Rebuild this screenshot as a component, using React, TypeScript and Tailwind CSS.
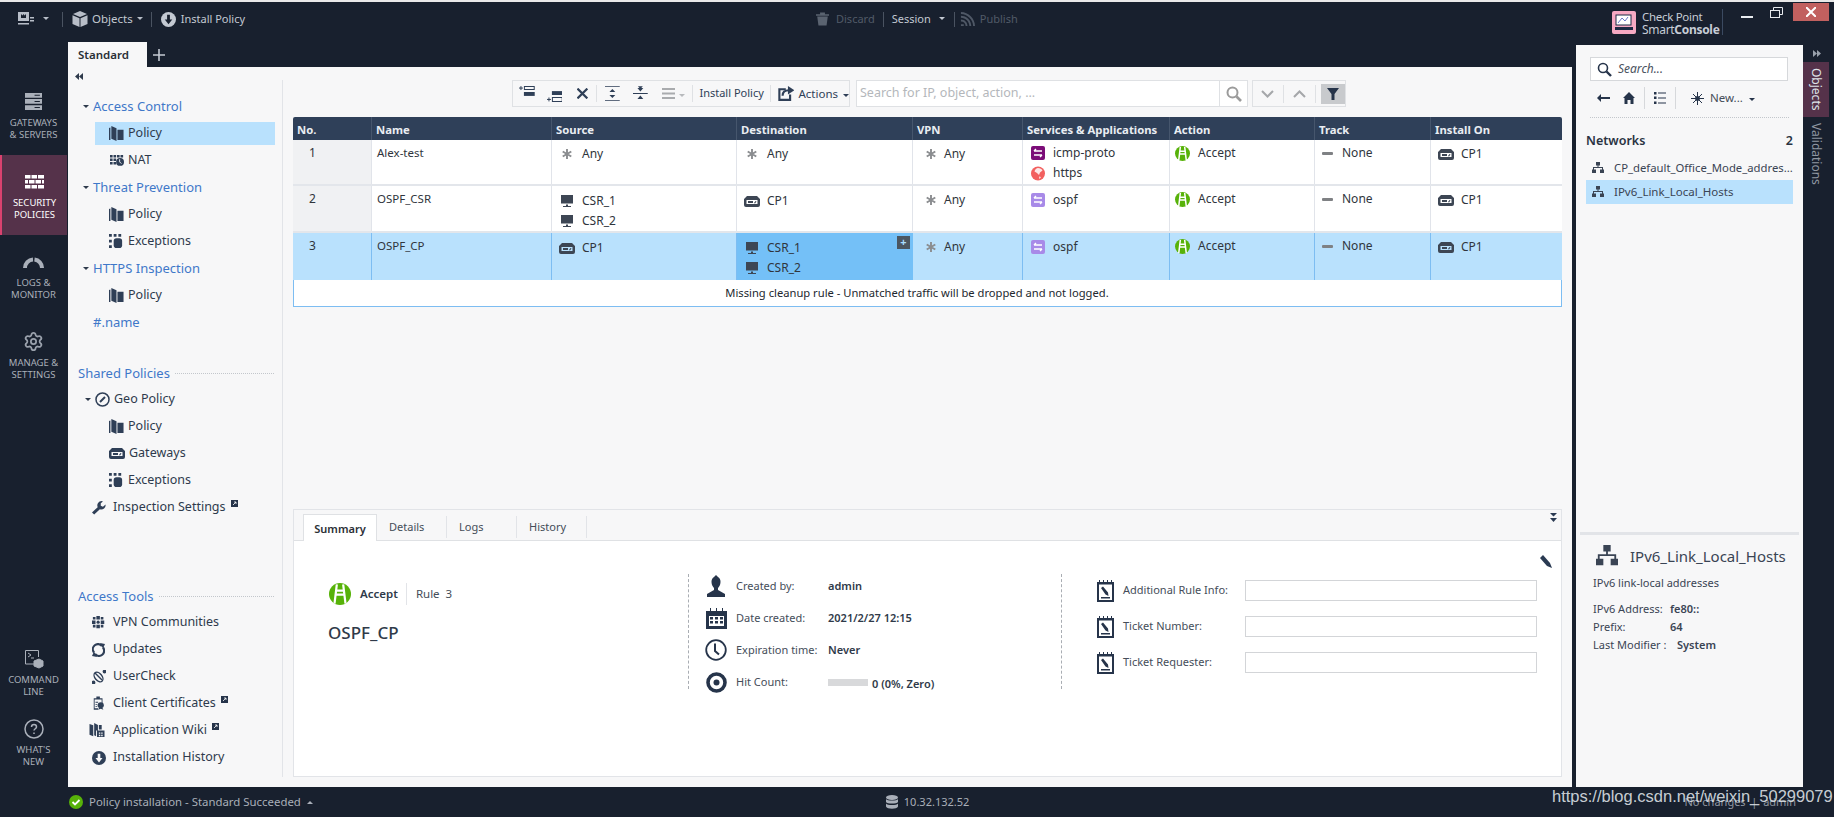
import React from "react";
import { Settings } from "lucide-react";

const F = "font-['Noto_Sans','Open_Sans',sans-serif]";

function Ic({ w = 14, h = 14, vb = "0 0 16 16", c = "", children }: any) {
  return (
    <svg width={w} height={h} viewBox={vb} className={"shrink-0 " + c} fill="currentColor">
      {children}
    </svg>
  );
}
const Book = () => (
  <Ic w={15} h={15} c="text-[#2f3f57]">
    <path d="M0 2l1.500-.5V15H0zM2.500 0L8 2.500V16L2.500 13.500zM9 4h6.500v11H9z" />
  </Ic>
);
const Nat = () => (
  <Ic w={16} h={14} c="text-[#2f3f57]">
    <path d="M0 1h3v3H0zM4 1h3v3H4zM8 1h3v3H8zM12 1h3v3h-3zM0 5h3v3H0zM4 5h3v3H4zM0 9h3v3H0zM4 9h3v3H4z" />
    <circle cx="11.500" cy="9" r="4.500" />
    <path d="M11 6v3l2 2" stroke="#fff" fill="none" />
  </Ic>
);
const Exc = () => (
  <Ic w={15} h={15} c="text-[#2f3f57]">
    <path d="M0 0h3v3H0zM0 6h3v3H0zM0 12h3v3H0zM5 0h3v3H5zM10 0h3v3h-3z" />
    <rect x="5" y="4.500" width="9" height="10.500" rx="3" />
  </Ic>
);
const Gw = ({ c = "text-[#3d4654]" }: any) => (
  <Ic w={16} h={11} vb="0 0 16 11" c={c}>
    <path fillRule="evenodd" d="M3 0h10l3 3v6a2 2 0 01-2 2H2a2 2 0 01-2-2V3zM2.500 4v4h11V4z" />
    <path d="M4 5h5v2H4zM10 7l1.500-2 1 .5L11 7.500z" />
  </Ic>
);
const Mon = () => (
  <Ic w={13} h={13} vb="0 0 13 13" c="text-[#3d4654]">
    <path d="M0 0h12v8.500H0zM5 9.500h2V11h3v1H2v-1h3z" />
  </Ic>
);
const Star = () => (
  <Ic w={10} h={10} vb="0 0 10 10" c="text-[#8b8d90]">
    <g stroke="currentColor" strokeWidth="1.900">
      <path d="M5 0v10M.7 2.500l8.600 5M9.300 2.500l-8.600 5" />
    </g>
  </Ic>
);
const Svc = ({ c }: { c: string }) => (
  <svg width="14" height="14" viewBox="0 0 14 14" className="shrink-0">
    <rect width="14" height="14" rx="2" fill={c} />
    <path d="M3 5h8M3 5l2-2M11 9H3M11 9l-2 2" stroke="#fff" strokeWidth="1.400" fill="none" />
  </svg>
);
const Globe = () => (
  <svg width="14" height="15" viewBox="0 0 14 15" className="shrink-0">
    <circle cx="7" cy="7.500" r="7" fill="#f2605f" />
    <path d="M7 2c2 0 4 1 4.500 2.500L9 6.500 8 9 6 7 3.500 5.500C4 3.500 5.500 2 7 2zM8 10.500l2 .5-1.500 2.200z" fill="#fff" opacity=".85" />
  </svg>
);
const Accept = ({ s = 15 }: { s?: number }) => (
  <svg width={s} height={s} viewBox="0 0 16 16" className="shrink-0">
    <circle cx="8" cy="8" r="8" fill="#57b209" />
    <path d="M5.700 1L4 15M10.300 1L12 15M5 5.500h6M4.500 8.500h7" stroke="#fff" strokeWidth="1.600" fill="none" />
  </svg>
);
const Dash = () => <span className="block w-[11px] h-[3px] bg-[#7f8184] shrink-0 rounded-[1px]" />;
const NetI = ({ s = 12 }: { s?: number }) => (
  <Ic w={s} h={s} vb="0 0 12 12" c="text-[#3a4454]">
    <path d="M4 0h4v3.500H6.500V5H11v2.500h1V11H8V7.500h2V6H2v1.500h2V11H0V7.500h1V5h4.500V3.500H4z" />
  </Ic>
);
const Cell = ({ items, pl, gap, pt = "pt-[4px]" }: any) => (
  <div className={`flex flex-col ${pt}`} style={{ paddingLeft: pl }}>
    {items.map(([icon, t]: any, i: number) => (
      <div key={i} className="flex items-center h-5" style={{ gap }}>
        <span className="flex items-center justify-center w-[14px] shrink-0">{icon}</span>
        <span className="text-[12px] text-[#30353c] whitespace-nowrap">{t}</span>
      </div>
    ))}
  </div>
);

const cols = "grid grid-cols-[79px_180px_185px_176px_110px_147px_145px_116px_131px]";
const heads = ["No.", "Name", "Source", "Destination", "VPN", "Services & Applications", "Action", "Track", "Install On"];

function Row({ n, name, src, dst, svc, sel, h, pt, svcPt }: any) {
  const b = sel ? "border-r border-[#7dbdf2]" : "border-r border-[#e1e4ea]";
  return (
    <div className={`${cols} ${h} ${sel ? "bg-[#b9e1fd]" : "bg-white border-b-2 border-[#e3e6eb]"}`}>
      <div className={`${b} ${sel ? "" : "bg-[#f0f1f3]"} pl-[16px] pt-[3px] text-[12px] leading-5 text-[#30353c]`}>{n}</div>
      <div className={`${b} pl-[5px] pt-[3px] text-[11.500px] leading-5 text-[#30353c]`}>{name}</div>
      <div className={b}><Cell pt={pt} pl={8} gap={8} items={src} /></div>
      <div className={`${sel ? "bg-[#74c0f7] relative" : b}`}>
        <Cell pt={pt} pl={8} gap={8} items={dst} />
        {sel && <span className="absolute right-[3px] top-[3px] w-[13px] h-[13px] bg-[#4b5661] text-[#a9dcff] text-[11px] leading-[12px] text-center font-bold">+</span>}
      </div>
      <div className={b}><Cell pl={11} gap={6} items={[[<Star />, "Any"]]} /></div>
      <div className={b}><Cell pt={svcPt} pl={8} gap={8} items={svc} /></div>
      <div className={b}><Cell pt="pt-[3px]" pl={5} gap={9} items={[[<Accept />, "Accept"]]} /></div>
      <div className={b}><Cell pt="pt-[3px]" pl={5} gap={8} items={[[<Dash />, "None"]]} /></div>
      <div><Cell pl={8} gap={8} items={[[<Gw />, "CP1"]]} /></div>
    </div>
  );
}

const Caret = () => <span className="inline-block align-[3px] w-0 h-0 border-x-[3px] border-x-transparent border-t-[3px] border-t-current" />;

function Nav({ icon, children, sel, ext, pl = 41, gap = 4 }: any) {
  return (
    <div className="h-[27px] flex items-center pl-[27px] pr-[7px]">
      <div className={`flex-1 h-[23px] flex items-center ${sel ? "bg-[#b9e1fd]" : ""}`} style={{ paddingLeft: pl - 27, gap }}>
        {icon}
        <span className="text-[12.500px] text-[#2e3a4c] whitespace-nowrap">{children}</span>
        {ext && <Ext />}
      </div>
    </div>
  );
}
const Ext = () => (
  <svg width="7" height="7" viewBox="0 0 7 7" className="shrink-0 -mt-[8px] ml-[1px]">
    <rect width="7" height="7" fill="#26344a" />
    <path d="M2 5l3-3M3 2h2v2" stroke="#fff" strokeWidth=".8" fill="none" />
  </svg>
);
function Head({ children }: any) {
  return (
    <div className="h-[27px] flex items-center pl-[15px] gap-[4px]">
      <span className="w-0 h-0 border-x-[3px] border-x-transparent border-t-[3px] border-t-[#2e3a4c]" />
      <span className="text-[13px] text-[#3f78c9] whitespace-nowrap">{children}</span>
    </div>
  );
}
function Sec({ children }: any) {
  return (
    <div className="h-[25px] flex items-center pl-[10px] pr-[8px] gap-[5px]">
      <span className="text-[13px] text-[#3f78c9] whitespace-nowrap">{children}</span>
      <span className="flex-1 border-t border-dotted border-[#c3c7cc]" />
    </div>
  );
}
function Tool({ icon, children, ext }: any) {
  return (
    <div className="h-[27px] flex items-center pl-[23px] pr-[7px] gap-[4px]">
      <span className="w-[15px] flex justify-center shrink-0">{icon}</span>
      <span className="ml-[3px] text-[12.500px] text-[#2e3a4c] whitespace-nowrap">{children}</span>
      {ext && <Ext />}
    </div>
  );
}
function RailItem({ icon, l1, l2, sel, h = "h-[80px]" }: any) {
  return (
    <div className={`${h} flex flex-col items-center justify-center gap-[3px] ${sel ? "bg-[#55324a] border-l-2 border-[#d9426f] text-white w-[67px]" : "text-[#a9afb9] w-[67px]"}`}>
      <span className="h-6 flex items-center justify-center">{icon}</span>
      <span className="text-[9.500px] leading-3 text-center whitespace-nowrap">{l1}<br />{l2}</span>
    </div>
  );
}
const RowS = ({ icon, label, children }: any) => (
  <div className="h-6 flex items-center mb-2">
    <span className="w-[22px] flex justify-center shrink-0">{icon}</span>
    <span className="ml-[9px] w-[92px] text-[11px] text-[#454d59] whitespace-nowrap">{label}</span>
    {children}
  </div>
);
const Note = () => (
  <Ic w={17} h={22} vb="0 0 17 22" c="text-[#26344a]">
    <path fillRule="evenodd" d="M0 2h17v20H0zM2 4.500v15.500h13V4.500z" />
    <path d="M2 0h1v3H2zM6 0h1v3H6zM10 0h1v3h-1zM14 0h1v3h-1zM4 8l2-1.500 5 6 .5 3.500-3-1.500z M4 17h9v1.500H4z" />
  </Ic>
);
const TicketRow = ({ label }: any) => (
  <div className="h-[21px] flex items-center mb-[15px]">
    <Note />
    <span className="ml-[9px] w-[122px] text-[11px] text-[#454d59] whitespace-nowrap">{label}</span>
    <span className="block w-[292px] h-[21px] bg-white border border-[#d3d5d8]" />
  </div>
);
const Val = ({ children }: any) => <span className="text-[11px] font-semibold text-[#2f3a49] whitespace-nowrap">{children}</span>;

export default function App() {
  return (
    <div className={`${F} w-[1834px] h-[817px] overflow-hidden flex flex-col bg-[#18202e] relative`}>
      <div className="h-[2px] bg-[#e9e9e9] shrink-0" />
      {/* Top bar */}
      <div className="h-[40px] shrink-0 flex items-start text-[#c3c9d2]">
        <div className="flex items-center h-[34px] text-[11.500px] pl-[18px] w-[700px]">
          <Ic w={16} h={14} vb="0 0 16 14" c="text-[#b8bec8]">
            <path d="M0 0h11v9H0zM12 5h4v1.500h-4zM12 8h4v1.500h-4zM0 11h11v1.500H0z" />
            <path d="M3 2l1.500 1.500L5.500 2l1 1.500L8 2v4H3z" fill="#18202e" />
          </Ic>
          <span className="ml-[9px] text-[#b8bec8]"><Caret /></span>
          <span className="ml-[13px] w-px h-[15px] bg-[#4a5361]" />
          <Ic w={16} h={16} c="ml-[9px] text-[#b8bec8]">
            <path d="M8 0l7 3-7 3-7-3zM.500 4.300l7 3V16l-7-3zM15.500 4.300l-7 3V16l7-3z" />
          </Ic>
          <span className="ml-[4px]">Objects</span>
          <span className="ml-[4px] text-[#b8bec8]"><Caret /></span>
          <span className="ml-[8px] w-px h-[15px] bg-[#4a5361]" />
          <Ic w={15} h={15} c="ml-[9px] text-[#c3c9d2]">
            <circle cx="8" cy="8" r="8" />
            <path d="M6.500 3h3v5H12l-4 5-4-5h2.500z" fill="#18202e" />
          </Ic>
          <span className="ml-[5px] text-[11px]">Install Policy</span>
        </div>
        <div className="flex items-center h-[34px] text-[11px] ml-[116px]">
          <Ic w={13} h={14} c="text-[#5a6370]">
            <path d="M5 0h6v2h5v2H0V2h5zM1.500 5h13L13 16H3z" />
          </Ic>
          <span className="ml-[7px] text-[#515a67]">Discard</span>
          <span className="ml-[8px] w-px h-[15px] bg-[#4a5361]" />
          <span className="ml-[8px] text-[#c3c9d2]">Session</span>
          <span className="ml-[8px] text-[#c3c9d2]"><Caret /></span>
          <span className="ml-[9px] w-px h-[15px] bg-[#4a5361]" />
          <Ic w={15} h={15} c="ml-[5px] text-[#4f5866]">
            <path d="M1 13h3v2H1zM1 8c4 0 7 3 7 7H6c0-3-2-5-5-5zM1 4c6 0 11 5 11 11h-2c0-5-4-9-9-9zM1 0c8 0 15 7 15 15h-2C14 8 8 2 1 2z" />
          </Ic>
          <span className="ml-[5px] text-[#515a67]">Publish</span>
        </div>
        <div className="ml-auto flex items-start">
          <svg width="24" height="23" viewBox="0 0 24 23" className="mt-[9px] shrink-0">
            <rect width="24" height="23" rx="2" fill="#f6a9c2" />
            <rect x="4" y="4" width="15" height="10" fill="#fff" stroke="#1d2a44" />
            <path d="M6 12l4-5 3 3 3-4" stroke="#6a78c8" fill="none" />
            <rect x="3" y="16" width="18" height="3" fill="#1d2a44" />
          </svg>
          <div className="ml-[6px] mt-[8px] w-[72px] flex flex-col leading-[13px] text-[11.500px] text-[#c6ccd5] whitespace-nowrap tracking-[-0.3px]">
            <span>Check Point</span>
            <span className="text-[12px]">Smart<b>Console</b></span>
          </div>
          <span className="ml-[8px] mt-[7px] w-px h-[26px] bg-[#3b4a61]" />
          <span className="ml-[18px] mt-[14px] w-[12px] h-[2px] bg-[#e8ebef]" />
          <svg width="13" height="13" viewBox="0 0 13 13" className="ml-[17px] mt-[5px]" fill="none" stroke="#e8ebef">
            <path d="M3.500 3V.5h9v7H10" />
            <rect x=".5" y="3.500" width="9" height="7" />
          </svg>
          <span className="ml-[10px] mr-[5px] mt-[1px] w-[36px] h-[18px] bg-[#c1605f] flex items-center justify-center">
            <svg width="10" height="10" viewBox="0 0 10 10" stroke="#fff" strokeWidth="2"><path d="M0 0l10 10M10 0L0 10" /></svg>
          </span>
        </div>
      </div>

      {/* Body */}
      <div className="flex-1 flex min-h-0">
        {/* Rail */}
        <div className="w-[68px] shrink-0 flex flex-col pt-[33px] pb-[18px]">
          <RailItem l1="GATEWAYS" l2="& SERVERS" icon={
            <Ic w={17} h={17} c="text-[#aab0ba]"><path fillRule="evenodd" d="M0 0h16v4.500H0zM0 5.700h16v4.500H0zM0 11.500h16V16H0zM9 1.700v1h5v-1zM9 7.500v1h5v-1zM9 13.200v1h5v-1z" /></Ic>
          } />
          <RailItem sel l1="SECURITY" l2="POLICIES" icon={
            <Ic w={19} h={14} vb="0 0 19 14" c="text-white"><path d="M0 0h5.500v3.500H0zM6.500 0h5.500v3.500H6.500zM13 0h6v3.500h-6zM0 5h3v3.500H0zM4 5h5.500v3.500H4zM10.500 5H16v3.500h-5.500zM17 5h2v3.500h-2zM0 10h5.500v3.500H0zM6.500 10h5.500v3.500H6.500zM13 10h6v3.500h-6z" /></Ic>
          } />
          <RailItem l1="LOGS &" l2="MONITOR" icon={
            <svg width="21" height="12" viewBox="0 0 21 12" fill="none" stroke="#aab0ba" strokeWidth="4"><path d="M2 12A8.500 8.500 0 0110 3.500M11.500 3.500A8.500 8.500 0 0119 12" /></svg>
          } />
          <RailItem l1="MANAGE &" l2="SETTINGS" icon={<Settings size={21} className="text-[#9aa1ac]" />} />
          <div className="flex-1" />
          <RailItem h="h-[54px]" l1="COMMAND" l2="LINE" icon={
            <svg width="20" height="20" viewBox="0 0 20 20" fill="none" stroke="#aab0ba"><path d="M13 15H1.500V1.500h13V8M4 4l3 2-3 2M7 9h3" /><path d="M10 12l5-2 4 2v5l-4 2-5-2z" fill="#aab0ba" /></svg>
          } />
          <div className="h-4" />
          <RailItem h="h-[54px]" l1="WHAT'S" l2="NEW" icon={
            <svg width="20" height="20" viewBox="0 0 20 20" fill="none" stroke="#aab0ba" strokeWidth="1.500"><circle cx="10" cy="10" r="9" /><path d="M7.500 8a2.500 2.500 0 115 0c0 1.500-2.500 2-2.500 3.500M10 13.500v1.500" /></svg>
          } />
        </div>

        {/* Centre */}
        <div className="w-[1504px] shrink-0 flex flex-col">
          <div className="h-[25px] flex items-center shrink-0">
            <div className="w-[79px] h-full bg-[#f7f7f8] flex items-center pl-[10px] text-[11.500px] font-semibold text-[#2a2f36]">Standard</div>
            <svg width="12" height="12" viewBox="0 0 12 12" className="ml-[6px]" stroke="#c3c9d2" strokeWidth="1.600"><path d="M6 0v12M0 6h12" /></svg>
          </div>
          <div className="flex-1 flex bg-[#f7f7f8] min-h-0">
            {/* Nav */}
            <div className="w-[214px] shrink-0 flex flex-col">
              <div className="h-[26px] pl-[7px] pt-[6px] shrink-0 flex items-start">
                <svg width="8" height="7" viewBox="0 0 8 7" fill="#2e3a4c"><path d="M4 0v7L0 3.500zM8 0v7L4 3.500z" /></svg>
              </div>
              <Head>Access Control</Head>
              <Nav sel icon={<Book />}>Policy</Nav>
              <Nav icon={<Nat />} gap={3}>NAT</Nav>
              <Head>Threat Prevention</Head>
              <Nav icon={<Book />}>Policy</Nav>
              <Nav icon={<Exc />}>Exceptions</Nav>
              <Head>HTTPS Inspection</Head>
              <Nav icon={<Book />}>Policy</Nav>
              <div className="h-[27px] flex items-center pl-[25px] text-[13px] text-[#3f78c9]">#.name</div>
              <div className="h-[25px]" />
              <Sec>Shared Policies</Sec>
              <div className="h-[27px] flex items-center pl-[17px] gap-[4px]">
                <span className="w-0 h-0 border-x-[3px] border-x-transparent border-t-[3px] border-t-[#2e3a4c]" />
                <svg width="15" height="15" viewBox="0 0 15 15" fill="none" stroke="#2f3f57" strokeWidth="1.500"><circle cx="7.500" cy="7.500" r="6.500" /><path d="M10 5L5 10" strokeWidth="2" /></svg>
                <span className="text-[12.500px] text-[#2e3a4c]">Geo Policy</span>
              </div>
              <Nav icon={<Book />}>Policy</Nav>
              <Nav icon={<Gw c="text-[#2f3f57]" />}>Gateways</Nav>
              <Nav icon={<Exc />}>Exceptions</Nav>
              <Tool ext icon={
                <Ic w={14} h={14} c="text-[#2f3f57]"><path d="M11 0a5 5 0 00-4.500 7L0 13l2.500 2.500L9 9.500A5 5 0 0015.500 4l-3 2.500-2.500-1L10 2.500 12.500.5z" /></Ic>
              }>Inspection Settings</Tool>
              <div className="flex-1" />
              <Sec>Access Tools</Sec>
              <Tool icon={
                <Ic w={14} h={14} c="text-[#2f3f57]"><path d="M5 0h4v4H5zM0 5h4v4H0zM10 5h4v4h-4zM5 10h4v4H5zM1 1h3v3H1zM10 1h3v3h-3zM1 10h3v3H1zM10 10h3v3h-3z" /><circle cx="7" cy="7" r="1.800" /></Ic>
              }>VPN Communities</Tool>
              <Tool icon={
                <svg width="13" height="14" viewBox="0 0 13 14" fill="none" stroke="#2f3f57" strokeWidth="2.200"><path d="M2 9.500A5 5 0 0110 3M11 4.500A5 5 0 013 11" /><path d="M8 0l5 1-2 4.500zM5 14l-5-1 2-4.500z" fill="#2f3f57" stroke="none" /></svg>
              }>Updates</Tool>
              <Tool icon={
                <svg width="14" height="14" viewBox="0 0 14 14" fill="none" stroke="#2f3f57" strokeWidth="1.400"><ellipse cx="6.500" cy="7" rx="3.500" ry="5.500" transform="rotate(-40 6.500 7)" /><path d="M3 3l7 7" /><circle cx="12.500" cy="1.500" r="1.200" fill="#2f3f57" /><circle cx="1.500" cy="12.500" r="1.200" fill="#2f3f57" /></svg>
              }>UserCheck</Tool>
              <Tool ext icon={
                <Ic w={14} h={15} c="text-[#2f3f57]"><path fillRule="evenodd" d="M2 2h3V0h4v2h3v6h-1V3.500H3v10h4V15H2z" /><path d="M4 6h3v1H4zM4 8.500h2v1H4zM4 11h2v1H4z" /><circle cx="10" cy="10" r="3.500" /><path d="M8 13l-1 2 3-1 3 1-1-2z" /></Ic>
              }>Client Certificates</Tool>
              <Tool ext icon={
                <Ic w={16} h={15} c="-ml-[3px] text-[#2f3f57]"><path d="M0 1l4 1.500V14L0 12.500zM5 0l4 2v6H7v6l-2-1zM10 2h3v5h-3zM8 8h8v7H8z" /><path d="M10 10h1.500v1.500H10zM12.500 10H14v1.500h-1.500zM10 12.500h1.500V14H10zM12.500 12.500H14V14h-1.500z" fill="#f7f7f8" /></Ic>
              }>Application Wiki</Tool>
              <Tool icon={
                <Ic w={14} h={14} c="text-[#2f3f57]"><circle cx="8" cy="8" r="8" /><path d="M6.500 3h3v5H12l-4 5-4-5h2.500z" fill="#f7f7f8" /></Ic>
              }>Installation History</Tool>
              <div className="h-[16px] shrink-0" />
            </div>
            <div className="w-px mt-[13px] mb-[10px] bg-[#e2e4e8] shrink-0" />

            {/* Main */}
            <div className="flex-1 flex flex-col pl-[10px] pr-[10px] pt-[13px] pb-[10px] min-w-0">
              {/* Toolbar */}
              <div className="h-[27px] flex items-stretch pl-[219px] shrink-0">
                <div className="w-[338px] border border-[#dfe1e4] flex items-center text-[#2f3f57]">
                  <svg width="16" height="13" viewBox="0 0 16 13" className="ml-[6px] -mt-[4px]" fill="currentColor"><path d="M0 3h4M2 1v4" stroke="currentColor" fill="none" /><path fillRule="evenodd" d="M5 1h11v4H5zM6 2v2h9V2z" /><path d="M5 7h11v4H5z" /></svg>
                  <svg width="16" height="13" viewBox="0 0 16 13" className="ml-[12px] mt-[6px]" fill="currentColor"><path d="M5 1h11v4H5z" /><path fillRule="evenodd" d="M5 7h11v5H5zM6 8v3h9V8z" /><path d="M0 9.500h4M2 7.500v4" stroke="currentColor" fill="none" /></svg>
                  <svg width="11" height="11" viewBox="0 0 11 11" className="ml-[15px]" stroke="currentColor" strokeWidth="2.200"><path d="M0.500 .5l10 10M10.500 .5l-10 10" /></svg>
                  <span className="ml-[8px] w-px h-[17px] bg-[#dfe1e4]" />
                  <svg width="15" height="15" viewBox="0 0 15 15" className="ml-[8px]" fill="currentColor"><path d="M0 0h15v1H0zM0 14h15v1H0zM7.500 3l3 3h-6zM7.500 12l-3-3h6z" /></svg>
                  <svg width="15" height="15" viewBox="0 0 15 15" className="ml-[13px]" fill="currentColor"><path d="M0 7h15v1H0zM5 0h5L7.500 3zM4.500 2h6L7.500 5.500zM7.500 9.500l3 3.500h-6z" /></svg>
                  <svg width="14" height="11" viewBox="0 0 14 11" className="ml-[14px]" fill="#a9abae"><path d="M0 0h14v2H0zM0 4.500h14v2H0zM0 9h14v2H0z" /></svg>
                  <span className="ml-[4px] text-[#b8babd]"><Caret /></span>
                  <span className="ml-[7px] w-px h-[17px] bg-[#dfe1e4]" />
                  <span className="ml-[6px] text-[11px] text-[#2f3f57] whitespace-nowrap">Install Policy</span>
                  <span className="ml-[6px] w-px h-[17px] bg-[#dfe1e4]" />
                  <svg width="17" height="15" viewBox="0 0 15 14" className="ml-[7px]" fill="none" stroke="currentColor" strokeWidth="2"><path d="M7 3H1v10h10V8" /><path d="M4 9c0-3 2-5 6-5" /><path d="M9 0l6 4-6 4z" fill="currentColor" stroke="none" /></svg>
                  <span className="ml-[4px] text-[11.500px] whitespace-nowrap">Actions</span>
                  <span className="ml-[5px]"><Caret /></span>
                </div>
                <div className="ml-[6px] w-[392px] bg-white border border-[#dfe1e4] flex items-center">
                  <span className="flex-1 pl-[3px] text-[12.500px] text-[#b4b7bb] whitespace-nowrap">Search for IP, object, action, ...</span>
                  <span className="w-[28px] h-full border-l border-[#dfe1e4] flex items-center justify-center">
                    <svg width="16" height="16" viewBox="0 0 16 16" fill="none" stroke="#9b9b9b" strokeWidth="2"><circle cx="6.500" cy="6.500" r="5" /><path d="M10.500 10.500L15 15" strokeWidth="2.600" /></svg>
                  </span>
                </div>
                <div className="ml-[4px] w-[94px] border border-[#dfe1e4] flex items-center">
                  <svg width="13" height="8" viewBox="0 0 13 8" className="ml-[8px]" fill="none" stroke="#a5a7aa" strokeWidth="2"><path d="M1 1l5.500 5.500L12 1" /></svg>
                  <span className="ml-[9px] w-px h-[18px] bg-[#dfe1e4]" />
                  <svg width="13" height="8" viewBox="0 0 13 8" className="ml-[9px]" fill="none" stroke="#a5a7aa" strokeWidth="2"><path d="M1 7l5.500-5.500L12 7" /></svg>
                  <span className="ml-[9px] w-px h-[18px] bg-[#dfe1e4]" />
                  <span className="ml-[5px] w-6 h-5 bg-[#c8cacd] flex items-center justify-center">
                    <svg width="12" height="12" viewBox="0 0 12 12" fill="#26344a"><path d="M0 0h12L7.500 6v6h-3V6z" /></svg>
                  </span>
                </div>
              </div>

              {/* Table */}
              <div className="mt-[10px] shrink-0">
                <div className={`${cols} h-[23px] bg-[#2f4059] rounded-t-[2px]`}>
                  {heads.map((t, i) => (
                    <div key={t} className={`pl-[4px] pt-px text-[11.300px] leading-[23px] font-bold text-[#e9edf2] whitespace-nowrap ${i < 8 ? "border-r border-[#46566d]" : ""}`}>{t}</div>
                  ))}
                </div>
                <Row h="h-[46px]" pt="pt-[4px]" svcPt="pt-[3px]" n="1" name="Alex-test" src={[[<Star />, "Any"]]} dst={[[<Star />, "Any"]]} svc={[[<Svc c="#7c0d78" />, "icmp-proto"], [<Globe />, "https"]]} />
                <Row h="h-[47px]" pt="pt-[5px]" n="2" name="OSPF_CSR" src={[[<Mon />, "CSR_1"], [<Mon />, "CSR_2"]]} dst={[[<Gw />, "CP1"]]} svc={[[<Svc c="#a88ae8" />, "ospf"]]} />
                <Row sel h="h-[47px]" pt="pt-[5px]" n="3" name="OSPF_CP" src={[[<Gw />, "CP1"]]} dst={[[<Mon />, "CSR_1"], [<Mon />, "CSR_2"]]} svc={[[<Svc c="#a88ae8" />, "ospf"]]} />
                <div className="h-[27px] pr-[21px] bg-white border border-t-0 border-[#7dbdf2] flex items-center justify-center text-[11.200px] text-[#22272e]">
                  Missing cleanup rule - Unmatched traffic will be dropped and not logged.
                </div>
              </div>
              <div className="flex-1" />

              {/* Bottom panel */}
              <div className="h-[268px] shrink-0 border border-[#e2e4e8] flex flex-col bg-white relative">
                <div className="h-[31px] shrink-0 bg-[#f7f7f8] border-b border-[#dfe1e4] flex items-end pl-[9px] relative">
                  <div className="w-[74px] h-[27px] -mb-px pt-[2px] bg-white border border-b-0 border-[#dfe1e4] flex items-center justify-center text-[11px] font-semibold text-[#2a2f36]">Summary</div>
                  {["Details", "Logs", "History"].map((t) => (
                    <div key={t} className="w-[70px] h-[22px] mb-[2px] border-r border-[#e2e4e8] pl-[12px] text-[11px] leading-[22px] text-[#454d59]">{t}</div>
                  ))}
                  <svg width="7" height="9" viewBox="0 0 7 9" fill="#2a3a52" className="absolute right-[4px] top-[3px]"><path d="M0 0h7L3.500 3.500zM0 5h7L3.500 9z" /></svg>
                </div>
                <div className="flex-1 flex pt-[33px] relative">
                  <svg width="12" height="13" viewBox="0 0 12 13" className="absolute right-[9px] top-[14px]" fill="#2a3a52"><path d="M0 3l3-3 7 8 2 5-5-2z" /></svg>
                  <div className="w-[394px] h-[115px] shrink-0 pl-[35px] pt-[9px]">
                    <div className="flex items-center h-[22px]">
                      <Accept s={22} />
                      <span className="ml-[9px] text-[11.500px] font-semibold text-[#2f3a49]">Accept</span>
                      <span className="ml-[8px] w-px h-[22px] bg-[#e2e4e8]" />
                      <span className="ml-[9px] text-[11.500px] text-[#454d59]">Rule&nbsp; 3</span>
                    </div>
                    <div className="mt-[16px] -ml-px text-[17px] leading-6 font-medium text-[#2f3a49]">OSPF_CP</div>
                  </div>
                  <div className="w-[373px] h-[115px] shrink-0 border-l border-dashed border-[#a9adb3] pl-[16px]">
                    <RowS label="Created by:" icon={
                      <Ic w={20} h={22} vb="0 0 20 22" c="text-[#26344a]"><path d="M10 0l2 2c2 1 2.500 3 2.500 5 0 3-1.500 5-2.500 6v2l7 4v3H1v-3l7-4v-2C7 12 5.500 10 5.500 7c0-2 .5-4 2.500-5z" /></Ic>
                    }><Val>admin</Val></RowS>
                    <RowS label="Date created:" icon={
                      <Ic w={21} h={21} vb="0 0 21 21" c="text-[#26344a]"><path fillRule="evenodd" d="M0 3h21v18H0zM3 8v10h15V8z" /><path d="M4 9h3v2.500H4zM9 9h3v2.500H9zM14 9h3v2.500h-3zM4 13h3v2.500H4zM9 13h3v2.500H9zM14 13h3v2.500h-3zM4 0h1v3H4zM10 0h1v3h-1zM16 0h1v3h-1z" /></Ic>
                    }><Val>2021/2/27 12:15</Val></RowS>
                    <RowS label="Expiration time:" icon={
                      <svg width="22" height="22" viewBox="0 0 22 22" fill="none" stroke="#26344a" strokeWidth="1.800"><circle cx="11" cy="11" r="9.800" /><path d="M10 4.500V12l4 3.500" strokeWidth="2" /></svg>
                    }><Val>Never</Val></RowS>
                    <RowS label="Hit Count:" icon={
                      <svg width="21" height="21" viewBox="0 0 21 21" fill="none"><circle cx="10.500" cy="10.500" r="8.500" stroke="#26344a" strokeWidth="3.600" /><circle cx="10.500" cy="10.500" r="3" fill="#26344a" /></svg>
                    }>
                      <span className="w-[40px] h-[7px] bg-[#d8d9db]" />
                      <span className="ml-[4px]"><Val>0 (0%, Zero)</Val></span>
                    </RowS>
                  </div>
                  <div className="h-[115px] flex-1 border-l border-dashed border-[#a9adb3] pl-[35px] pt-[6px]">
                    <TicketRow label="Additional Rule Info:" />
                    <TicketRow label="Ticket Number:" />
                    <TicketRow label="Ticket Requester:" />
                  </div>
                </div>
              </div>
            </div>
          </div>
        </div>

        {/* Right panel */}
        <div className="w-[4px] shrink-0" />
        <div className="w-[227px] shrink-0 mt-[3px] bg-[#f7f7f8] flex flex-col">
          <div className="mt-[12px] mx-[14px] w-[198px] h-[24px] bg-white border border-[#d6d8db] flex items-center pl-[6px] shrink-0">
            <svg width="15" height="15" viewBox="0 0 15 15" fill="none" stroke="#26344a" strokeWidth="1.600"><circle cx="6" cy="6" r="4.500" /><path d="M9.500 9.500L14 14" strokeWidth="2.400" /></svg>
            <span className="ml-[6px] text-[12px] italic text-[#4a5260]">Search...</span>
          </div>
          <div className="h-[26px] mt-[4px] flex items-center pl-[21px] shrink-0 text-[#26344a]">
            <svg width="13" height="8" viewBox="0 0 13 8" fill="currentColor"><path d="M0 4l4-4v3h9v2H4v3z" /></svg>
            <svg width="12" height="12" viewBox="0 0 12 12" className="ml-[13px]" fill="currentColor"><path d="M6 0l6 6h-1.500v6H7.500V8h-3v4H1.500V6H0z" /></svg>
            <span className="ml-[9px] w-px h-[22px] bg-[#d6d8db]" />
            <svg width="12" height="12" viewBox="0 0 12 12" className="ml-[9px]" fill="currentColor"><path d="M0 0h2.500v2.500H0zM4 .5h8v1H4zM0 4.500h2.500V7H0zM4 5.500h8v1H4zM0 9.500h2.500V12H0zM4 10.500h8v1H4z" /></svg>
            <span className="ml-[9px] w-px h-[22px] bg-[#d6d8db]" />
            <svg width="13" height="13" viewBox="0 0 13 13" className="ml-[15px]" stroke="currentColor"><path d="M6.500 0v13M0 6.500h13M2 2l9 9M11 2l-9 9" /><circle cx="6.500" cy="6.500" r="2" fill="currentColor" /></svg>
            <span className="ml-[6px] text-[11.500px] text-[#454d59]">New...</span>
            <span className="ml-[6px]"><Caret /></span>
          </div>
          <div className="mt-[6px] mx-[14px] border-t border-dotted border-[#c3c7cc] shrink-0" />
          <div className="mt-[15px] mx-[10px] flex justify-between items-center h-[16px] text-[12.500px] font-semibold text-[#2a3342] shrink-0">
            <span>Networks</span><span>2</span>
          </div>
          <div className="mt-[7px] mx-[10px] h-[24px] flex items-center pl-[6px] shrink-0">
            <NetI />
            <span className="ml-[10px] text-[11.300px] text-[#3a4454] whitespace-nowrap">CP_default_Office_Mode_addres...</span>
          </div>
          <div className="mx-[10px] h-[24px] flex items-center pl-[6px] bg-[#b9e1fd] shrink-0">
            <NetI />
            <span className="ml-[10px] text-[11.500px] text-[#3a4454]">IPv6_Link_Local_Hosts</span>
          </div>
          <div className="flex-1" />
          <div className="mx-[4px] h-[3px] bg-[#e2e4e8] shrink-0" />
          <div className="h-[252px] shrink-0 pl-[17px] pt-[9px] text-[#3a4454]">
            <div className="flex items-center h-6 pl-[3px]">
              <NetI s={22} />
              <span className="ml-[12px] text-[15px]">IPv6_Link_Local_Hosts</span>
            </div>
            <div className="mt-[6px] text-[11px] h-[18px] leading-[18px]">IPv6 link-local addresses</div>
            <div className="mt-[8px] text-[11px] h-[18px] flex items-center"><span className="w-[77px]">IPv6 Address:</span><b className="font-semibold">fe80::</b></div>
            <div className="text-[11px] h-[18px] flex items-center"><span className="w-[77px]">Prefix:</span><b className="font-semibold">64</b></div>
            <div className="text-[11px] h-[18px] flex items-center"><span className="w-[84px]">Last Modifier :</span><b className="font-semibold">System</b></div>
          </div>
        </div>

        {/* Right rail */}
        <div className="flex-1 flex flex-col items-center min-w-0">
          <svg width="8" height="7" viewBox="0 0 8 7" fill="#9aa1ac" className="mt-[8px] ml-[-3px]"><path d="M0 0v7l4-3.500zM4 0v7l4-3.500z" /></svg>
          <div className="mt-[5px] ml-[-5px] w-[26px] h-[55px] bg-[#55324a] flex items-center justify-center">
            <span className="[writing-mode:vertical-rl] text-[12px] text-[#dfe3e8]">Objects</span>
          </div>
          <span className="mt-[6px] ml-[-5px] [writing-mode:vertical-rl] text-[12px] text-[#8f96a1]">Validations</span>
        </div>
      </div>

      {/* Status */}
      <div className="h-[30px] shrink-0 flex items-center text-[#a9afb9] pl-[69px]">
        <svg width="14" height="14" viewBox="0 0 14 14"><circle cx="7" cy="7" r="7" fill="#57b209" /><path d="M3.500 7l2.500 2.500 4.500-4.500" stroke="#fff" strokeWidth="1.800" fill="none" /></svg>
        <span className="ml-[6px] text-[11.400px] whitespace-nowrap">Policy installation - Standard Succeeded</span>
        <span className="ml-[6px] w-0 h-0 border-x-[3px] border-x-transparent border-b-[3px] border-b-[#a9afb9]" />
        <div className="ml-[573px] flex items-center">
          <Ic w={12} h={14} vb="0 0 12 14" c="text-[#a9afb9]"><ellipse cx="6" cy="2.500" rx="6" ry="2.500" /><path d="M0 4c1 2 11 2 12 0v3c-1 2-11 2-12 0zM0 8.500c1 2 11 2 12 0v3c-1 3-11 3-12 0z" /></Ic>
          <span className="ml-[6px] text-[11px]">10.32.132.52</span>
        </div>
        <span className="ml-auto mr-[38px] text-[11px] whitespace-nowrap text-[#8f96a1]">No changes &nbsp;|&nbsp; admin</span>
      </div>
      <div className="absolute left-[1552px] top-[786px] text-[16.500px] leading-5 text-[#dfe3e8]/90 font-['Liberation_Sans',sans-serif] whitespace-nowrap">https://blog.csdn.net/weixin_50299079</div>
    </div>
  );
}
